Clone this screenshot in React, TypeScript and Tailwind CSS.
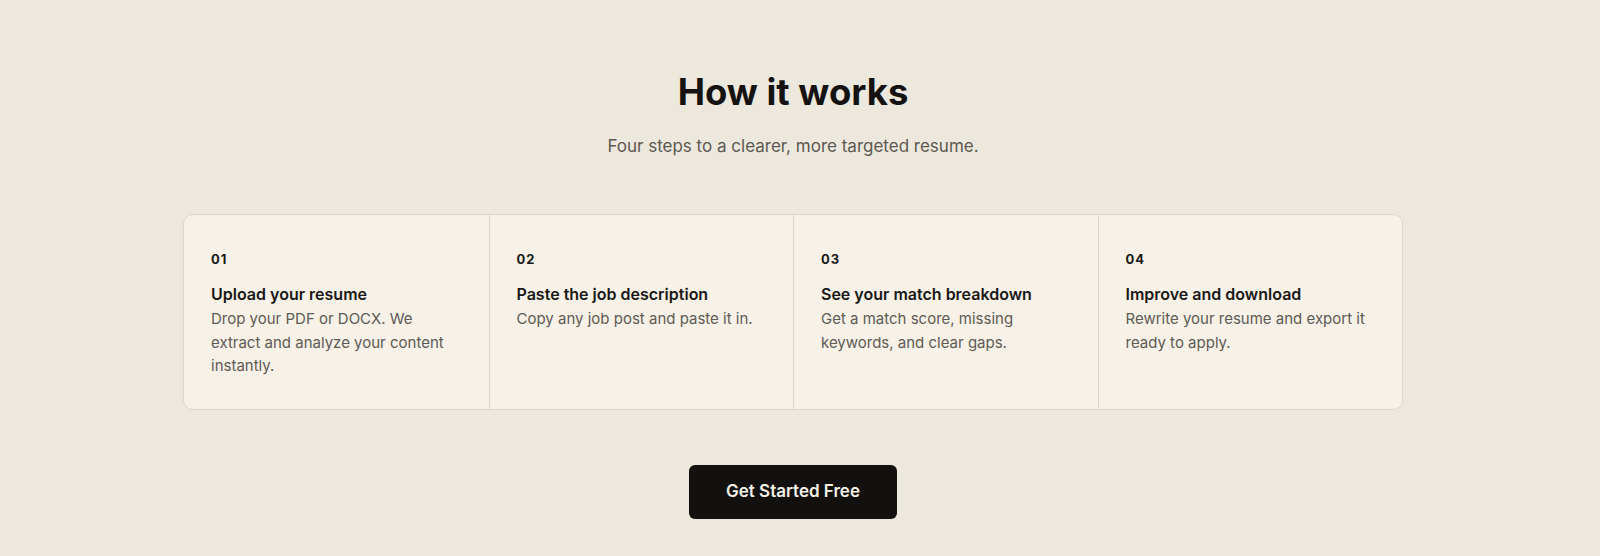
import React from "react";

const steps = [
  { n: "01", t: "Upload your resume", d: "Drop your PDF or DOCX. We extract and analyze your content instantly." },
  { n: "02", t: "Paste the job description", d: "Copy any job post and paste it in." },
  { n: "03", t: "See your match breakdown", d: "Get a match score, missing keywords, and clear gaps." },
  { n: "04", t: "Improve and download", d: "Rewrite your resume and export it ready to apply." },
];

export default function App() {
  return (
    <div className="min-h-[556px] w-full bg-[#ede8dd]">
      <div
        className="w-[1586px] flex flex-col items-center pt-[72px] pb-10"
        style={{ fontFamily: "Inter, 'Noto Sans', sans-serif" }}
      >
        <h2 className="text-[36.5px] leading-[40px] font-bold text-[#141311]">How it works</h2>
        <p className="mt-[22px] text-[17px] leading-[24px] text-[#5c5852]">
          Four steps to a clearer, more targeted resume.
        </p>
        <div className="mt-[56px] w-[1220px] grid grid-cols-4 rounded-[10px] border border-[#ddd6ca] bg-[#f7f1e7] overflow-hidden">
          {steps.map((s, i) => (
            <div
              key={s.n}
              className={
                "pl-[27px] pr-6 pt-[34px] pb-[31px] " + (i > 0 ? "border-l border-[#ddd6ca]" : "")
              }
            >
              <div className="text-[13px] leading-[20px] font-bold tracking-[0.08em] text-[#1a1816]">{s.n}</div>
              <div className="mt-[13px] text-[16px] leading-[24px] font-semibold text-[#1a1816]">{s.t}</div>
              <p className="mt-[1px] text-[15px] leading-[23.5px] text-[#5e5a54]">{s.d}</p>
            </div>
          ))}
        </div>
        <button className="mt-[55px] w-[208px] h-[54px] rounded-[6px] bg-[#121110] text-[#f5f0e6] text-[17px] font-semibold">
          Get Started Free
        </button>
      </div>
    </div>
  );
}
